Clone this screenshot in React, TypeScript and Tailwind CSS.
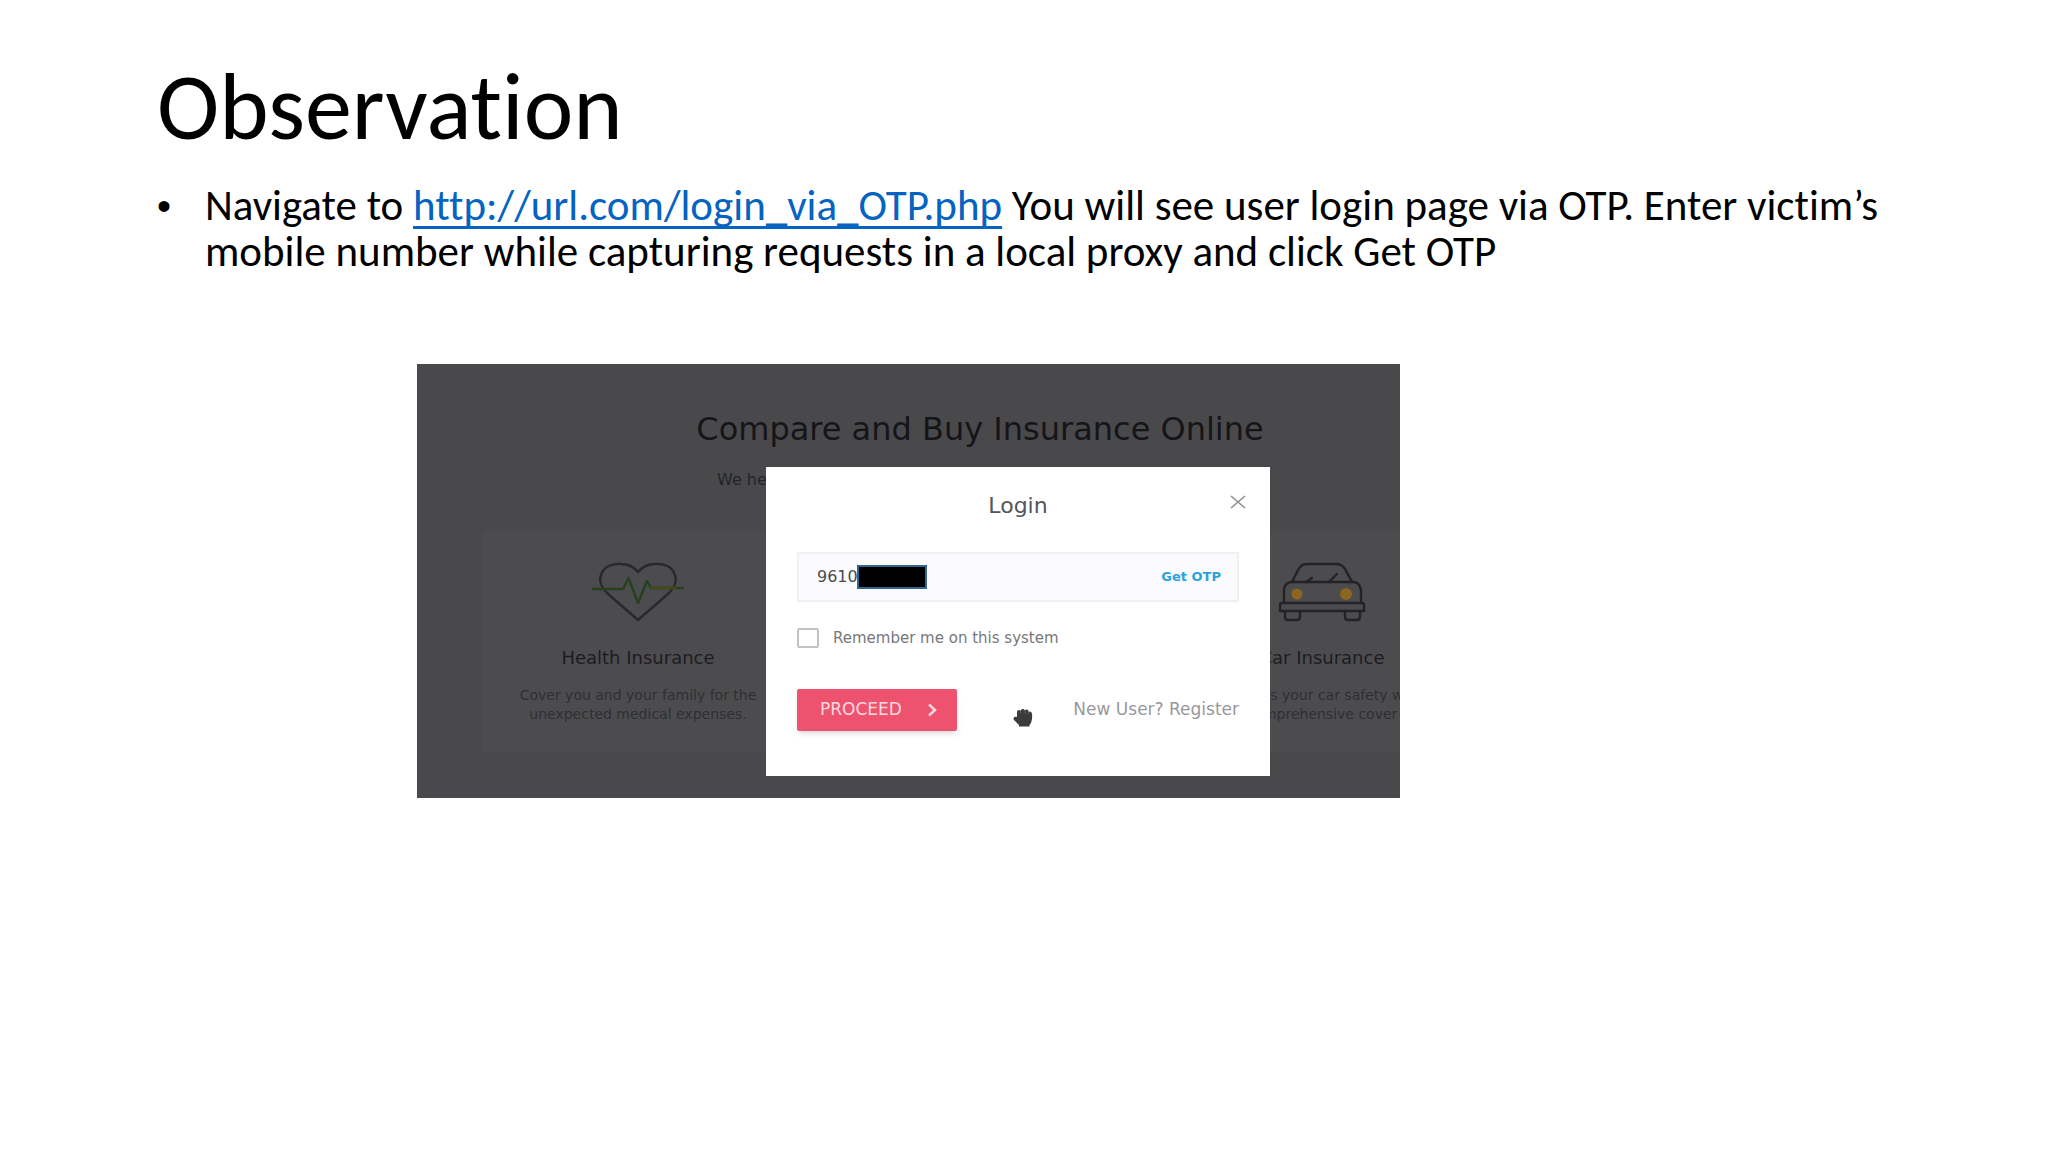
import React from "react";

// Heart with a pulse line running through it
function HeartPulseIcon() {
  return (
    <svg viewBox="0 0 92 60" className="h-[60px] w-[92px]" fill="none" strokeWidth="2.4" strokeLinecap="round" strokeLinejoin="round">
      <path d="M46 58 L15 31 C9 25 7 18 9 13 C12 4 21 1.500 29 2 C36 2 42 5 46 10 C50 5 56 2 63 2 C71 1.500 80 4 83 13 C85 18 83 25 77 31 Z" stroke="#29292c" />
      <path d="M1 27 H31 L36.500 16 L46 41 L55 19 L59 26 H91" stroke="#26401f" />
      <path d="M59 26 H83" stroke="#454a14" />
    </svg>
  );
}

function CarIcon() {
  return (
    <svg viewBox="0 0 88 60" className="h-[60px] w-[88px]" fill="none" stroke="#232326" strokeWidth="2.400" strokeLinejoin="round" strokeLinecap="round">
      <path d="M14 20 L20 8 Q23 2 29 2 H58 Q64 2 67 7 L74 20" />
      <path d="M6 41 V27 Q7 21 13 20 H76 Q82 21 83 28 V41" />
      <path d="M4 41 H84 Q86 41 86 43 V49 H2 V43 Q2 41 4 41 Z" />
      <path d="M7 49 V55 Q7 58 10 58 H19 Q22 58 22 55 V49 M67 49 V55 Q67 58 70 58 H79 Q82 58 82 55 V49" />
      <path d="M51 20 L59 12 M28 20 L34 16" />
      <circle cx="19" cy="32" r="5.500" fill="#8a661e" stroke="none" />
      <circle cx="68" cy="32" r="6" fill="#8a661e" stroke="none" />
    </svg>
  );
}

// Closed hand pointer
function GrabCursor() {
  return (
    <svg viewBox="0 0 22 20" className="h-5 w-[22px]">
      <path d="M5 9 V4 Q5 2 7 2 Q8 2 8.500 3 Q9 0.800 11 1 Q12.500 1 13 2.500 Q14 1 15.500 1.800 Q16.600 2.300 16.800 4 Q18.500 3 19.500 4.500 Q20.500 6 20 11 Q19.500 15 17.500 17 V18.500 H7 V17 L2 12 Q0.800 10 2.500 9 Q4 8.500 5 9 Z" fill="#3b3b3d" />
      <path d="M8.500 3 V5.500 M13 2.700 V5.500 M16.800 4 V6" stroke="#6b6b6d" strokeWidth="0.800" />
    </svg>
  );
}

function InsuranceCard({ icon, title, lines }: { icon?: React.ReactNode; title?: string; lines?: string[] }) {
  return (
    <div className="flex h-[220px] w-[312px] shrink-0 flex-col items-center bg-[#4c4c4e] pt-[31px]">
      {icon}
      {title && <h3 className="mt-5 text-lg leading-8 whitespace-nowrap text-[#1c1c20]">{title}</h3>}
      {lines && (
        <p className="mt-3 text-center text-sm leading-[19px] whitespace-nowrap text-[#2f2f33]">
          {lines.map((line) => (
            <span key={line} className="block">{line}</span>
          ))}
        </p>
      )}
    </div>
  );
}

function LoginDialog() {
  return (
    <form role="dialog" aria-label="Login" className="absolute top-[103px] left-[349px] h-[309px] w-[504px] bg-white px-[31px]">
      <h3 className="pt-[25px] text-center text-[22px] leading-7 text-[#55555a]">Login</h3>
      <button type="button" aria-label="Close" className="absolute top-7 right-6 text-[#8c8c90]">
        <svg viewBox="0 0 16 14" className="h-3.5 w-4" stroke="currentColor" strokeWidth="1.500">
          <path d="M1 1 L15 13 M15 1 L1 13" />
        </svg>
      </button>

      <div className="mt-8 flex h-[50px] items-center border-2 border-[#f0f0f3] bg-[#fbfbfd] pr-4 pl-[18px]">
        <input aria-label="Mobile number" defaultValue="9610" className="w-10 bg-transparent text-base text-[#4b4b50] outline-none" />
        <span className="h-6 w-[70px] border-2 border-[#2f6690] bg-black" />
        <button type="button" className="ml-auto text-[13px] font-bold text-[#2aa3dc]">Get OTP</button>
      </div>

      <label className="mt-6 flex h-6 items-center gap-3.5 text-[15px] text-[#77777b]">
        <input type="checkbox" className="h-5 w-[22px] appearance-none rounded-xs border-2 border-[#c2c2c5] bg-white" />
        Remember me on this system
      </label>

      <div className="mt-[39px] flex items-center justify-between">
        <button type="submit" className="flex h-[42px] w-40 items-center justify-between rounded-xs bg-[#ed526f] pr-5 pl-[23px] text-[17px] text-[#fcd9df] shadow-md">
          PROCEED
          <svg viewBox="0 0 10 14" className="h-3.5 w-2.5" fill="none" stroke="currentColor" strokeWidth="2.500">
            <path d="M2 1.500 L8 7 L2 12.500" />
          </svg>
        </button>
        <a href="#register" className="text-[17px] text-[#98989c]">New User? Register</a>
      </div>

      <div className="absolute top-[241px] left-[246px]">
        <GrabCursor />
      </div>
    </form>
  );
}

export default function App() {
  return (
    <main className="min-h-screen bg-white px-[157px] pt-[57px] font-['Carlito','Lato',sans-serif] text-black [font-variant-ligatures:none]">
      <h1 className="text-[94px] leading-[100px]">Observation</h1>

      <ul className="mt-[26px] text-[43px] leading-[46px]">
        <li className="flex">
          <span className="w-12 shrink-0 font-['Liberation_Sans',sans-serif] text-[40px]">•</span>
          <p>
            Navigate to{" "}
            <a href="http://url.com/login_via_OTP.php" className="text-[#0563c1] underline decoration-3 underline-offset-6 [text-decoration-skip-ink:none]">
              http://url.com/login_via_OTP.php
            </a>{" "}
            You will see user login page via OTP. Enter victim’s mobile number while capturing requests in a local proxy and click Get OTP
          </p>
        </li>
      </ul>

      <figure className="relative mt-[89px] ml-[260px] h-[434px] max-w-[983px] overflow-hidden bg-[#49494c] font-['DejaVu_Sans',sans-serif]">
        <div className="flex w-[1126px] flex-col items-center">
          <h2 className="pt-[47px] text-[32px] leading-9 text-[#151518]">Compare and Buy Insurance Online</h2>
          <p className="mt-[17px] w-[530px] pl-[2px] text-base leading-8 text-[#242428]">We help</p>
          <div className="mt-[35px] flex gap-[30px]">
            <InsuranceCard icon={<HeartPulseIcon />} title="Health Insurance" lines={["Cover you and your family for the", "unexpected medical expenses."]} />
            <InsuranceCard />
            <InsuranceCard icon={<CarIcon />} title="Car Insurance" lines={["Ensures your car safety with", "comprehensive cover"]} />
          </div>
        </div>
        <LoginDialog />
      </figure>
    </main>
  );
}
